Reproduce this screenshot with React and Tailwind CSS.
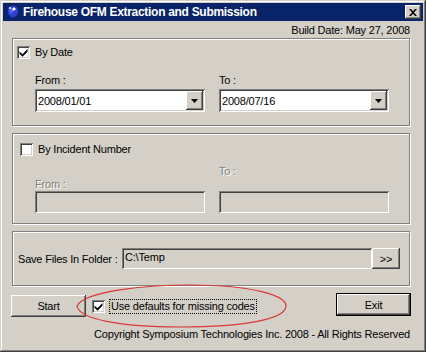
import React from 'react';

const raised =
  'shadow-[inset_-1px_-1px_#404040,inset_1px_1px_#ffffff,inset_-2px_-2px_#808080,inset_2px_2px_#d4d0c8]';
const sunken =
  'shadow-[inset_1px_1px_#808080,inset_-1px_-1px_#ffffff,inset_2px_2px_#404040,inset_-2px_-2px_#d4d0c8]';
const etched = 'border border-[#808080] shadow-[inset_1px_1px_#ffffff,1px_1px_#ffffff]';

function CheckBox({ checked }) {
  return (
    <div className={`w-[13px] h-[13px] bg-white shrink-0 flex items-center justify-center ${sunken}`}>
      {checked && (
        <svg width="9" height="9" viewBox="0 0 9 9">
          <path d="M0.5 3.5 L3.5 6.2 L8.5 1 L8.5 3.8 L3.5 8.8 L0.5 5.8 Z" fill="#000" />
        </svg>
      )}
    </div>
  );
}

function Combo({ value }) {
  return (
    <div className={`w-[170px] h-[23px] bg-white flex items-center pl-[3px] pr-[2px] ${sunken}`}>
      <span className="flex-1 text-black">{value}</span>
      <div className={`w-[17px] h-[19px] bg-[#d4d0c8] flex items-center justify-center ${raised}`}>
        <svg width="7" height="4" viewBox="0 0 7 4">
          <path d="M0 0 H7 L3.5 4 Z" fill="#000" />
        </svg>
      </div>
    </div>
  );
}

function DisabledField() {
  return <div className={`w-[170px] h-[22px] bg-[#d4d0c8] ${sunken}`} />;
}

export default function App() {
  const dim = 'text-[#808080] [text-shadow:1px_1px_0_#ffffff]';
  return (
    <div className="w-[426px] h-[352px] relative bg-[#d4d0c8] p-[3px] text-[11px] leading-[14px] tracking-[-0.2px] text-black font-['Liberation_Sans',Arial,sans-serif] shadow-[inset_-1px_-1px_#404040,inset_1px_1px_#d4d0c8,inset_-2px_-2px_#808080,inset_2px_2px_#ffffff] overflow-hidden">
      {/* title bar */}
      <div className="h-[18px] bg-[#0a246a] flex items-center pl-[2px] pr-[2px]">
        <svg width="16" height="16" viewBox="0 0 16 16" className="shrink-0">
          <path d="M3 5 Q5 1 10 2 Q14 4 13 9 Q11 14 6 13 Q2 11 3 5 Z" fill="#2f3fd0" />
          <path d="M4 7 Q6 3 10 4 Q9 8 6 10 Z" fill="#5068ff" />
          <circle cx="9" cy="5" r="1.6" fill="#ffffff" />
          <circle cx="5" cy="4" r="1" fill="#ffffff" />
        </svg>
        <span className="ml-[2px] text-white font-bold text-[12px] tracking-[-0.3px]">
          Firehouse OFM Extraction and Submission
        </span>
        <div className="flex-1" />
        <div className={`w-[16px] h-[14px] bg-[#d4d0c8] flex items-center justify-center ${raised}`}>
          <svg width="8" height="7" viewBox="0 0 8 7">
            <path d="M0 0 H2 L4 2.2 L6 0 H8 L5 3.5 L8 7 H6 L4 4.8 L2 7 H0 L3 3.5 Z" fill="#000" />
          </svg>
        </div>
      </div>

      {/* build date */}
      <div className="h-[17px] flex items-center justify-end pr-[13px]">Build Date: May 27, 2008</div>

      {/* By date */}
      <div className={`ml-[9px] w-[398px] h-[88px] ${etched} pl-[4px] pt-[6px]`}>
        <div className="flex items-center gap-[5px]">
          <CheckBox checked />
          <span>By Date</span>
        </div>
        <div className="flex gap-[14px] pl-[18px] mt-[14px]">
          <div>
            <div className="h-[14px]">From :</div>
            <div className="mt-[2px]">
              <Combo value="2008/01/01" />
            </div>
          </div>
          <div>
            <div className="h-[14px]">To :</div>
            <div className="mt-[2px]">
              <Combo value="2008/07/16" />
            </div>
          </div>
        </div>
      </div>

      {/* By incident */}
      <div className={`ml-[9px] mt-[7px] w-[398px] h-[91px] ${etched} pl-[7px] pt-[8px]`}>
        <div className="flex items-center gap-[5px]">
          <CheckBox />
          <span>By Incident Number</span>
        </div>
        <div className="flex gap-[14px] pl-[15px] mt-[3px]">
          <div>
            <div className={`h-[14px] mt-[18px] ${dim}`}>From :</div>
            <DisabledField />
          </div>
          <div>
            <div className={`h-[14px] mt-[5px] ${dim}`}>To :</div>
            <div className="mt-[13px]">
              <DisabledField />
            </div>
          </div>
        </div>
      </div>

      {/* save folder */}
      <div className={`ml-[9px] mt-[7px] w-[398px] h-[55px] ${etched} flex items-center pl-[5px]`}>
        <span className="w-[104px]">Save Files In Folder :</span>
        <div className={`w-[250px] h-[21px] bg-[#d4d0c8] pl-[3px] pt-[2px] ${sunken}`}>C:\Temp</div>
        <div className={`w-[28px] h-[21px] bg-[#d4d0c8] flex items-center justify-center ${raised}`}>&gt;&gt;</div>
      </div>

      {/* bottom row */}
      <div className="flex items-center mt-[6px] pl-[8px] h-[25px]">
        <div className={`w-[75px] h-[22px] mt-[2px] flex items-center justify-center ${raised}`}>Start</div>
        <div className="ml-[6px] mt-[4px] flex items-center">
          <CheckBox checked />
          <span className="ml-[5px] px-[1px] outline-1 outline-dotted outline-black leading-[13px]">
            Use defaults for missing codes
          </span>
        </div>
        <div className="flex-1" />
        <div className={`mr-[12px] w-[75px] h-[23px] border border-black flex items-center justify-center ${raised}`}>
          Exit
        </div>
      </div>

      {/* copyright */}
      <div className="flex justify-end pr-[13px] mt-[10px]">
        Copyright Symposium Technologies Inc. 2008 - All Rights Reserved
      </div>

      {/* red annotation */}
      <svg className="absolute left-[75px] top-[283px]" width="214" height="46" viewBox="0 0 214 46">
        <path
          d="M2 23 C 10 8, 70 2, 115 2 C 175 2, 211 12, 211 23 C 211 36, 170 44, 105 44 C 45 44, 4 36, 2 23 Z"
          fill="none"
          stroke="#d83838"
          strokeWidth="1.2"
        />
      </svg>
    </div>
  );
}
